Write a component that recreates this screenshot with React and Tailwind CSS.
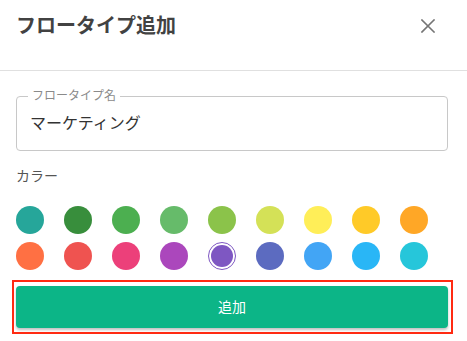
import React, { useState } from "react";

const COLORS = [
  "#26a69a", "#388e3c", "#4caf50", "#66bb6a", "#8bc34a", "#d4e157", "#ffee58", "#ffca28", "#ffa726",
  "#ff7043", "#ef5350", "#ec407a", "#ab47bc", "#7e57c2", "#5c6bc0", "#42a5f5", "#29b6f6", "#26c6da",
];

const CloseIcon = () => (
  <svg width="14" height="14" viewBox="0 0 14 14" fill="none">
    <path d="M1 1L13 13M13 1L1 13" stroke="#757575" strokeWidth="1.6" strokeLinecap="square" />
  </svg>
);

const ColorDot = ({ color, selected, onClick }) => {
  if (selected) {
    return (
      <button
        type="button"
        onClick={onClick}
        className="w-7 h-7 rounded-full bg-white p-[2px] border"
        style={{ borderColor: color }}
      >
        <span className="block w-full h-full rounded-full" style={{ backgroundColor: color }} />
      </button>
    );
  }
  return (
    <button
      type="button"
      onClick={onClick}
      className="w-7 h-7 rounded-full"
      style={{ backgroundColor: color }}
    />
  );
};

export default function App() {
  const [name, setName] = useState("マーケティング");
  const [selected, setSelected] = useState("#7e57c2");

  return (
    <div
      className="w-[467px] h-[341px] bg-white overflow-hidden"
      style={{ fontFamily: '"Roboto", "Noto Sans CJK JP", sans-serif' }}
    >
      {/* Header */}
      <div className="h-[71px] border-b border-[#e0e0e0] flex items-start justify-between pl-4 pr-[32px] pt-[14px]">
        <h2 className="text-[20px] leading-6 font-bold text-[#424242]">フロータイプ追加</h2>
        <button type="button" className="mt-[5px]">
          <CloseIcon />
        </button>
      </div>

      <div className="pl-4 pr-[19px] pt-[25px]">
        {/* Name field */}
        <div className="relative h-[55px] rounded-[4px] border border-[#c8c8c8] flex items-center px-[13px]">
          <span className="absolute left-[11px] -top-[9px] bg-white px-[4px] text-[12px] leading-4 text-[#8a8a8a]">
            フロータイプ名
          </span>
          <input
            value={name}
            onChange={(e) => setName(e.target.value)}
            className="w-full outline-none text-[16px] text-[#333]"
          />
        </div>

        {/* Colors */}
        <div className="mt-[15px] text-[14px] leading-5 text-[#555]">カラー</div>
        <div className="mt-5 grid grid-cols-[repeat(9,28px)] gap-x-5 gap-y-2">
          {COLORS.map((c) => (
            <ColorDot key={c} color={c} selected={selected === c} onClick={() => setSelected(c)} />
          ))}
        </div>

        {/* Submit */}
        <div className="relative mt-4">
          <button
            type="button"
            className="w-full h-[42px] rounded-[4px] bg-[#0cb587] text-white text-[14px] shadow-[0_2px_3px_rgba(0,0,0,0.25)]"
          >
            追加
          </button>
          <div className="absolute -left-[4px] -right-[5px] -top-[6px] -bottom-[6px] border-2 border-[#ff2a12] pointer-events-none" />
        </div>
      </div>
    </div>
  );
}
